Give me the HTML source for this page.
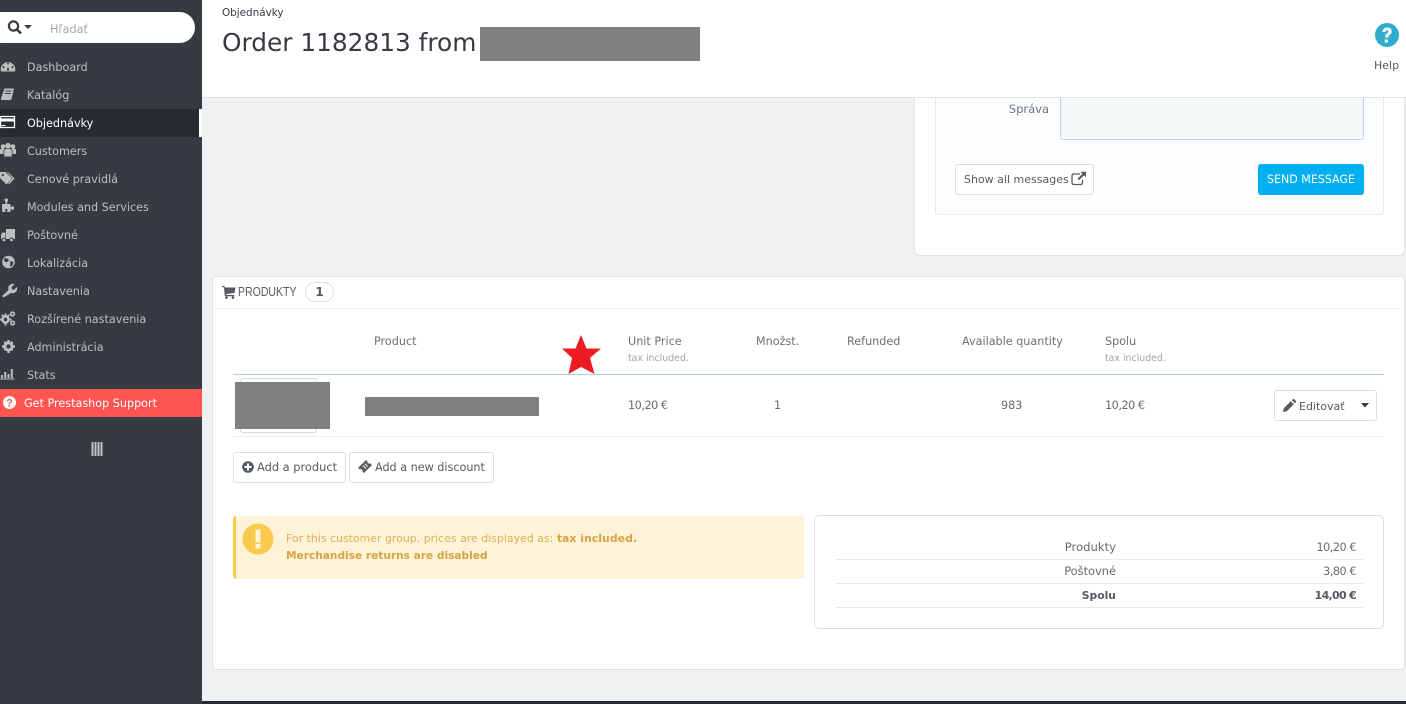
<!DOCTYPE html>
<html lang="sk"><head><meta charset="utf-8"><title>Order 1182813</title>
<style>
html,body{margin:0;padding:0;width:1406px;height:704px;overflow:hidden;background:#eff1f2}
body{position:relative;font-family:"DejaVu Sans","Liberation Sans",sans-serif;font-size:11.2px;color:#666b70}
.a{position:absolute;box-sizing:border-box}
.t{position:absolute;white-space:nowrap;line-height:20px;height:20px;margin-top:2px}
.n{color:#bebebe;left:27px;font-size:11.2px}
.g{background:#808080;position:absolute}
.btn{position:absolute;box-sizing:border-box;background:#fff;border:1px solid #dcdfe2;border-radius:3px}
.h{font-size:11.2px;color:#6b7075}
.s{font-size:9.4px;color:#a0a3a6}
.r{text-align:right}
.p{letter-spacing:-.45px}
</style></head><body>

<!-- main backdrop -->
<div class="a" style="left:202px;top:0;width:1204px;height:97px;background:#fff"></div>
<div class="a" style="left:202px;top:97px;width:1204px;height:1px;background:#dcdfe2"></div>
<div class="a" style="left:202px;top:701px;width:1204px;height:3px;background:#282b30"></div>

<!-- sidebar -->
<div class="a" style="left:0;top:0;width:202px;height:704px;background:#363a41"></div>
<div class="a" style="left:0;top:109px;width:202px;height:28px;background:#282b30"></div>
<div class="a" style="left:199px;top:109px;width:3px;height:28px;background:#fff"></div>
<div class="a" style="left:0;top:389px;width:202px;height:28px;background:#ff5450"></div>
<div class="a" style="left:-14px;top:12px;width:209px;height:31px;background:#fff;border-radius:16px"></div>

<svg class="a" style="left:0;top:0" width="202" height="470" viewBox="0 0 202 470">
  <!-- search -->
  <circle cx="13.5" cy="26" r="4.6" fill="none" stroke="#363a41" stroke-width="2.2"/>
  <path d="M17 29.500l4 4" stroke="#363a41" stroke-width="2.6" fill="none"/>
  <path d="M24 25h8l-4 4z" fill="#363a41"/>
  <g fill="#bebebe">
    <!-- dashboard -->
    <path d="M1 71.500A7.300 7.300 0 1 1 15 71.500Z"/>
    <path d="M8 67l1.500 3.500h-3z" fill="#363a41"/>
    <circle cx="3.500" cy="67" r="1" fill="#363a41"/><circle cx="8" cy="63.500" r="1" fill="#363a41"/><circle cx="12.500" cy="67" r="1" fill="#363a41"/>
    <!-- book -->
    <path d="M4.500 88.500h9.500l-2.500 10.500q-.3 1-1.500 1h-8.500q-.8 0-.5-1.500z"/>
    <path d="M5.500 91h6M4.800 93.500h6" stroke="#363a41" stroke-width="1"/>
    <!-- card -->
    <path d="M.5 116.500h14v11h-14z" fill="none" stroke="#fff" stroke-width="1.300"/>
    <path d="M0 118.500h14.500v3h-14.500z" fill="#fff"/><path d="M1.500 125.500h4" stroke="#fff"/>
    <!-- users -->
    <circle cx="3" cy="146.500" r="2.300"/><circle cx="8" cy="145.800" r="2.800"/><circle cx="13" cy="146.500" r="2.300"/>
    <path d="M0 154v-3.500q0-2 2-2h2.500q-1 1-1 3v2.500zM4.200 156.500v-5q0-2.500 2-2.500h3.600q2 0 2 2.500v5zM12.500 154v-2.500q0-2-1-3h2.500q2 0 2 2v3.500z"/>
    <!-- tags -->
    <path d="M0 172h5.500l6.500 6.500-5.500 6-6.500-6.500zM8 172l6.500 6.500-5.300 5.800-1-1 4.300-4.800-5.500-6.500z"/>
    <circle cx="2.800" cy="175" r="1.100" fill="#363a41"/>
    <!-- puzzle -->
    <path d="M2 204h3.500v-2q-1-1-1-2 0-1.500 1.800-1.500t1.800 1.500q0 1-1 2v2h3.500v3q1-.8 2-.8 1.500 0 1.500 1.800t-1.500 1.800q-1 0-2-.8v3h-3.500v-1.500q1-.8 0-1.500h-1.500q-1 .7 0 1.500v1.500h-3.500z"/>
    <!-- truck -->
    <path d="M6 229h9v10h-9zM2 232.500h3.500v6.500h-4.500v-3.500z"/>
    <circle cx="4" cy="240" r="1.900" stroke="#363a41"/><circle cx="11.500" cy="240" r="1.900" stroke="#363a41"/>
    <!-- globe -->
    <circle cx="8.500" cy="262" r="6.300"/>
    <path d="M4.500 258l3 .5 1.500 2-2.500 2-2.500-1.500zM10.500 261l3 1-1 3.500-2.500 1z" fill="#363a41"/>
    <!-- wrench -->
    <path d="M3.500 297.500l-1.500-1.500 6.500-6q-1-3.500 1.500-5.200t4.500-.5l-3 3 .5 2 2 .5 3-3q.8 3-1 5t-5 1.200z"/>
    <!-- cogs -->
    <path d="M4.500 313.500h2v12h-2zM-.500 318.500h12v2h-12zM1 315.500l1.400-1.400 7 7-1.400 1.400zM8.600 314.100l1.400 1.400-7 7-1.400-1.400z"/>
    <circle cx="5.500" cy="319.500" r="4.300"/>
    <circle cx="5.500" cy="319.500" r="1.700" fill="#363a41"/>
    <circle cx="12.500" cy="314" r="1.800" fill="none" stroke="#bebebe" stroke-width="1.700"/>
    <circle cx="12.500" cy="323" r="1.800" fill="none" stroke="#bebebe" stroke-width="1.700"/>
    <!-- cog -->
    <path d="M7.300 340h2.400v13h-2.400zM2 345.300h13v2.400h-13zM3.500 342.700l1.700-1.700 8.300 8.300-1.700 1.700zM11.800 341l1.700 1.700-8.300 8.300-1.700-1.700z"/>
    <circle cx="8.500" cy="346.500" r="5"/>
    <circle cx="8.500" cy="346.500" r="2.100" fill="#363a41"/>
    <!-- stats -->
    <path d="M0 378.500h14.500v1h-14.500zM1 375h2v3h-2zM4.200 372h2v6h-2zM7.500 374h2v4h-2zM10.800 369h2v9h-2z"/>
    <!-- support -->
    <circle cx="9.500" cy="402.500" r="6.500" fill="#fff"/>
  </g>
  <text x="9.500" y="406.500" font-family="Liberation Sans,sans-serif" font-weight="700" font-size="11" text-anchor="middle" fill="#ff5450">?</text>
  <!-- collapse bars -->
  <path d="M92.500 442v14M95.500 442v14M98.500 442v14M101.500 442v14" stroke="#c4c2c8" stroke-width="2"/>
</svg>

<span class="t" style="left:50px;top:18px;color:#a3a7aa;font-size:11.200px">Hľadať</span>
<span class="t n" style="top:56px">Dashboard</span>
<span class="t n" style="top:84px">Katalóg</span>
<span class="t n" style="top:112px;color:#fff">Objednávky</span>
<span class="t n" style="top:140px">Customers</span>
<span class="t n" style="top:168px">Cenové pravidlá</span>
<span class="t n" style="top:196px">Modules and Services</span>
<span class="t n" style="top:224px">Poštovné</span>
<span class="t n" style="top:252px">Lokalizácia</span>
<span class="t n" style="top:280px">Nastavenia</span>
<span class="t n" style="top:308px">Rozšírené nastavenia</span>
<span class="t n" style="top:336px">Administrácia</span>
<span class="t n" style="top:364px">Stats</span>
<span class="t" style="left:24px;top:392px;color:#fff;font-size:11.200px">Get Prestashop Support</span>

<!-- header -->
<span class="t" style="left:222px;top:1px;font-size:10.400px;color:#363a41">Objednávky</span>
<span class="t" style="left:222px;top:21px;height:40px;line-height:40px;font-size:24.800px;color:#363a41">Order 1182813 from</span>
<div class="g" style="left:480px;top:27px;width:220px;height:34px"></div>
<svg class="a" style="left:1374px;top:22px" width="26" height="26" viewBox="0 0 26 26">
  <circle cx="13" cy="13" r="12" fill="#2eacce"/>
  <path d="M8.500 10q0-4.500 4.700-4.500 4.500 0 4.500 4 0 2.200-2.200 3.500-1.200.8-1.200 2v.6h-3.100v-1q0-2 1.800-3.200 1.400-.9 1.400-1.900 0-1.300-1.300-1.300-1.500 0-1.600 1.900zM10.800 17.500h3.100v3h-3.100z" fill="#fff"/>
</svg>
<span class="t" style="left:1374px;top:54px;font-size:11px;color:#555a60">Help</span>

<!-- message panel -->
<div class="a" style="left:915px;top:98px;width:489px;height:157px;background:#fff;border-radius:0 0 5px 5px;box-shadow:0 0 0 1px #dfe3e6"></div>
<div class="a" style="left:935px;top:98px;width:449px;height:117px;background:#fcfdfe;border:1px solid #e6e9ee;border-top:0;border-radius:0 0 3px 3px"></div>
<div class="a" style="left:1060px;top:98px;width:304px;height:42px;background:#f5f8f9;border:1px solid #c5d3d8;border-top:0;border-radius:0 0 3px 3px"></div>
<span class="t r" style="left:949px;width:100px;top:97px;font-size:11.500px;color:#72777c">Správa</span>
<div class="btn" style="left:955px;top:164px;width:139px;height:31px"></div>
<span class="t" style="left:964px;top:168px;font-size:11px;color:#555a60">Show all messages</span>
<svg class="a" style="left:1071px;top:171px" width="16" height="15" viewBox="0 0 16 15">
  <path d="M9 3H3q-2 0-2 2v6.500q0 2 2 2h6.500q2 0 2-2V8.500" fill="none" stroke="#555a60" stroke-width="1.300"/>
  <path d="M9.500 .8h5.500v5.500l-2-2-5 5-1.500-1.500 5-5z" fill="#555a60"/>
</svg>
<div class="a" style="left:1258px;top:164px;width:106px;height:31px;background:#00aff0;border-radius:3px;color:#fff;font-size:11.050px;line-height:31px;text-align:center;white-space:nowrap">SEND MESSAGE</div>

<!-- products panel -->
<div class="a" style="left:212px;top:276px;width:1193px;height:394px;background:#fff;border:1px solid #dde1e4;border-radius:5px"></div>
<div class="a" style="left:217px;top:308px;width:1183px;height:1px;background:#eceeef"></div>
<svg class="a" style="left:222px;top:285px" width="14" height="14" viewBox="0 0 14 14">
  <path d="M0 1h2.500l.5 1.500h10.500l-1 5.500-8.500 1 .3 1h8v1.200h-9.500L2 2.200H0z" fill="#555a60"/>
  <circle cx="4.500" cy="12.600" r="1.300" fill="#555a60"/><circle cx="11" cy="12.600" r="1.300" fill="#555a60"/>
</svg>
<span class="t" style="left:238px;top:280px;font-family:'Liberation Sans',sans-serif;font-size:13px;color:#555a60;transform:scaleX(.81);transform-origin:0 50%">PRODUKTY</span>
<div class="a" style="left:305px;top:282px;width:29px;height:20px;border:1px solid #dcdfe2;border-radius:10px;text-align:center;line-height:18px;font-weight:700;font-size:12px;color:#555a60">1</div>

<span class="t h" style="left:374px;top:330px">Product</span>
<span class="t h" style="left:628px;top:330px">Unit Price</span>
<span class="t s" style="left:628px;top:347px">tax included.</span>
<span class="t h" style="left:756px;top:330px">Množst.</span>
<span class="t h" style="left:847px;top:330px">Refunded</span>
<span class="t h" style="left:962px;top:330px">Available quantity</span>
<span class="t h" style="left:1105px;top:330px">Spolu</span>
<span class="t s" style="left:1105px;top:347px">tax included.</span>

<svg class="a" style="left:555px;top:330px" width="55" height="50" viewBox="555 330 55 50">
  <polygon points="581,335 586.500,348.500 601,348.500 590,358 594.500,374 581,367 568.500,374 572,358 562,348.500 575.500,348.500" fill="#ed1c24"/>
</svg>
<div class="a" style="left:233px;top:374px;width:1151px;height:1px;background:#a2d2ec"></div>
<div class="a" style="left:233px;top:436px;width:1151px;height:1px;background:#eceeef"></div>

<div class="a" style="left:240px;top:378px;width:77px;height:55px;border:1px solid #d5d8db;border-radius:3px"></div>
<div class="g" style="left:235px;top:382px;width:95px;height:47px"></div>
<div class="g" style="left:365px;top:397px;width:174px;height:19px"></div>

<span class="t p" style="left:628px;top:394px;font-size:11.200px">10,20 €</span>
<span class="t" style="left:774px;top:394px;font-size:11.200px">1</span>
<span class="t" style="left:1001px;top:394px;font-size:11.200px">983</span>
<span class="t p" style="left:1105px;top:394px;font-size:11.200px">10,20 €</span>

<div class="btn" style="left:1274px;top:390px;width:103px;height:31px"></div>
<svg class="a" style="left:1283px;top:399px" width="13" height="13" viewBox="0 0 13 13">
  <path d="M0 13l.8-3.800 7-7 3 3-7 7zM8.800 1.200l1-1q.7-.5 1.300 0l1.700 1.700q.5.600 0 1.300l-1 1z" fill="#555a60"/>
</svg>
<span class="t" style="left:1299px;top:395px;font-size:11px;color:#555a60">Editovať</span>
<svg class="a" style="left:1360px;top:403px" width="10" height="6" viewBox="0 0 10 6"><path d="M1 0h8L5 4.500z" fill="#363a41"/></svg>

<div class="btn" style="left:233px;top:452px;width:113px;height:31px"></div>
<svg class="a" style="left:242px;top:461px" width="12" height="12" viewBox="0 0 12 12">
  <circle cx="6" cy="6" r="5.800" fill="#555a60"/><path d="M5 2.500h2V5h2.500v2H7v2.500H5V7H2.500V5H5z" fill="#fff"/>
</svg>
<span class="t" style="left:257px;top:455px;font-size:11.400px;color:#555a60">Add a product</span>
<div class="btn" style="left:349px;top:452px;width:145px;height:31px"></div>
<svg class="a" style="left:358px;top:460px" width="14" height="14" viewBox="0 0 14 14">
  <path d="M0 8l8-8 1.500 1.500q-.5 1.500 1 1.800 1 .6 1.800.2L14 5l-8 8-1.500-1.500q.5-1.300-.8-2-1.300-.8-2.200-.2z" fill="#555a60"/>
  <path d="M5 5.500l3 3M6.800 3.700l3 3" stroke="#fff" stroke-width="1"/>
</svg>
<span class="t" style="left:375px;top:456px;font-size:11.200px;color:#555a60">Add a new discount</span>

<!-- alert -->
<div class="a" style="left:233px;top:516px;width:571px;height:63px;background:#fff3d7;border-left:3px solid #fcc94f;border-radius:3px"></div>
<svg class="a" style="left:242px;top:523px" width="32" height="32" viewBox="0 0 32 32">
  <circle cx="16" cy="16" r="15.500" fill="#fcc94f"/><path d="M13.500 6.500h5v13h-5zM13.500 21h5v4.500h-5z" fill="#fff3d7"/>
</svg>
<span class="t" style="left:286px;top:527px;font-size:10.950px;color:#dcae5b">For this customer group, prices are displayed as: <b style="color:#d5a343">tax included.</b></span>
<span class="t" style="left:286px;top:544px;font-size:10.600px;font-weight:700;color:#d5a343">Merchandise returns are disabled</span>

<!-- totals -->
<div class="a" style="left:814px;top:515px;width:570px;height:114px;border:1px solid #dcdfe2;border-radius:5px;background:#fff"></div>
<div class="a" style="left:835px;top:559px;width:528px;height:1px;background:#e8eaec"></div>
<div class="a" style="left:835px;top:583px;width:528px;height:1px;background:#e8eaec"></div>
<div class="a" style="left:835px;top:607px;width:528px;height:1px;background:#e8eaec"></div>
<span class="t r" style="left:1000px;width:116px;top:535px;font-size:11.600px">Produkty</span>
<span class="t r p" style="left:1240px;width:116px;top:536px;font-size:11.200px">10,20 €</span>
<span class="t r" style="left:1000px;width:116px;top:559px;font-size:11.400px">Poštovné</span>
<span class="t r p" style="left:1240px;width:116px;top:560px;font-size:11.200px">3,80 €</span>
<span class="t r" style="left:1000px;width:116px;top:584px;font-size:10.800px;font-weight:700;color:#555a60">Spolu</span>
<span class="t r" style="left:1240px;width:116px;top:584px;font-size:11px;font-weight:700;color:#555a60;letter-spacing:-.7px">14,00 €</span>
</body></html>
